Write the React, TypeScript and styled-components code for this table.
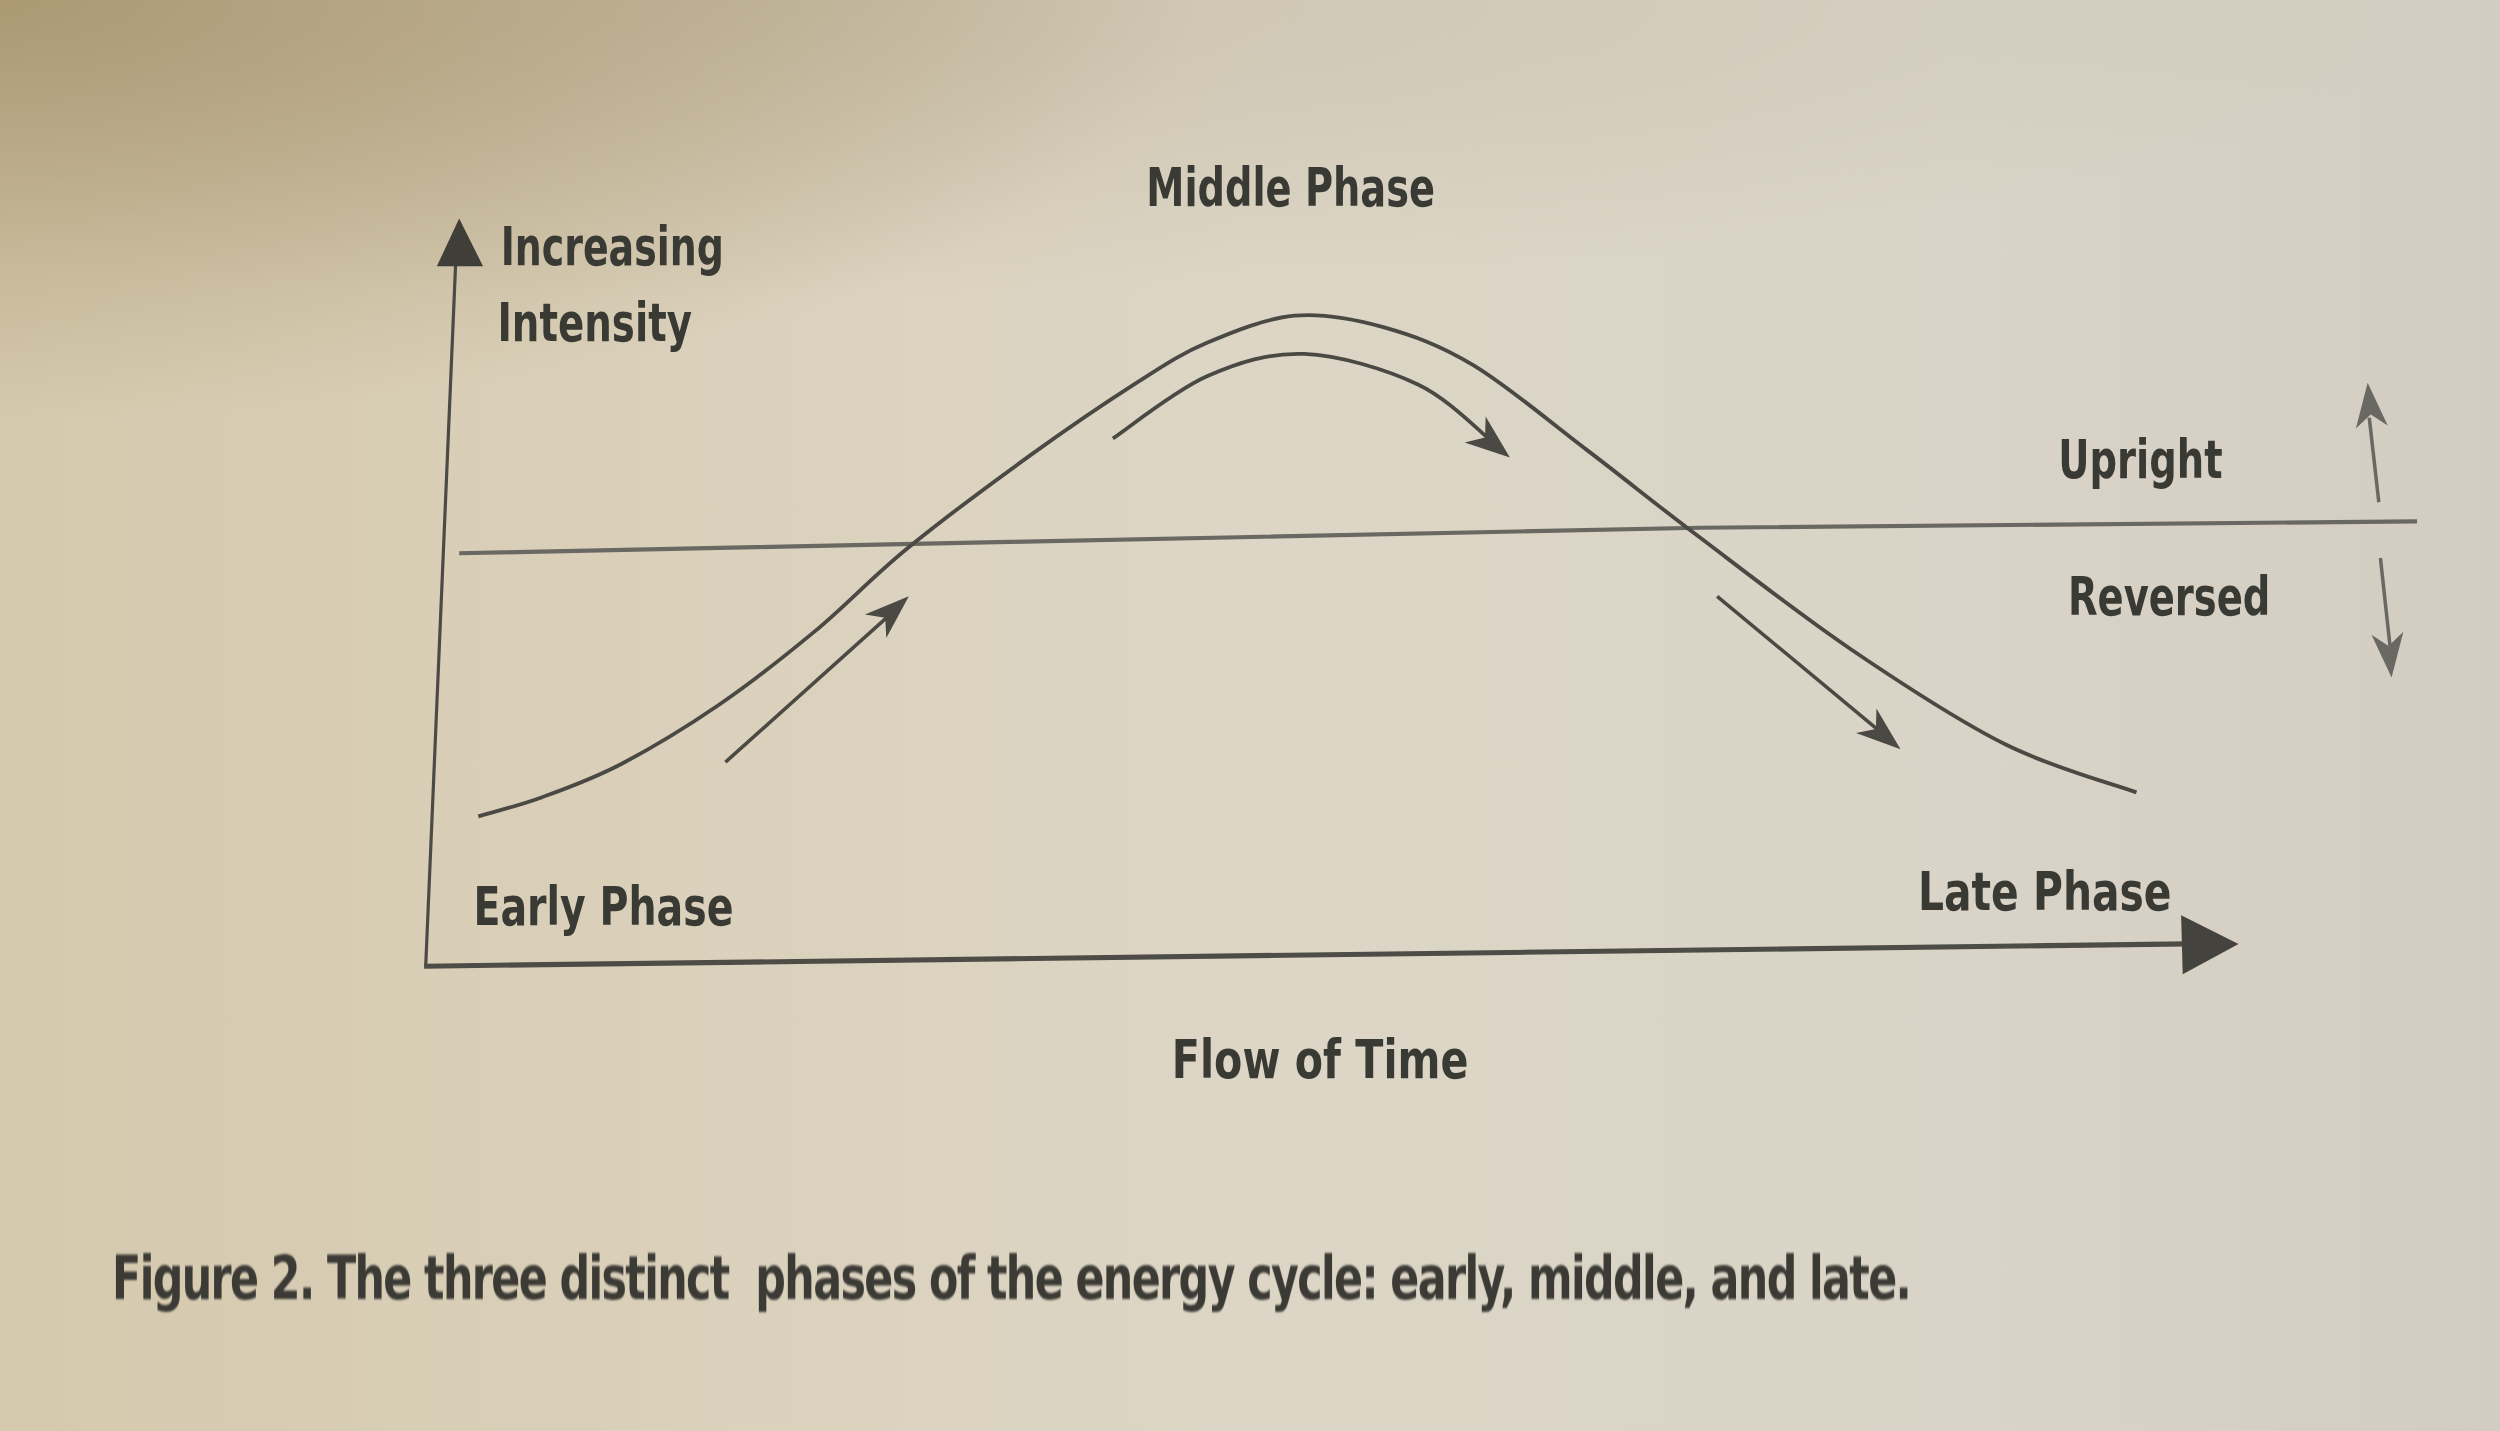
import React from 'react';
import styled, { createGlobalStyle } from 'styled-components';

// the reference was read at 1568px wide; the drawing works in those units and is scaled up
const S = 2500 / 1568;
const FIGURE_HEIGHT = 1190;

type Pt = [number, number];

const GlobalStyle = createGlobalStyle`
  html, body {
    margin: 0;
    padding: 0;
  }
  body {
    width: 2500px;
    height: 1431px;
    overflow: hidden;
    font-family: "DejaVu Sans Condensed", "DejaVu Sans", sans-serif;
  }
`;

// smooth path through points (catmull-rom as cubic beziers)
function smoothPath(pts: Pt[]) {
  let d = `M${pts[0][0]},${pts[0][1]}`;
  for (let i = 0; i < pts.length - 1; i++) {
    const p0 = pts[i - 1] || pts[i];
    const p1 = pts[i];
    const p2 = pts[i + 1];
    const p3 = pts[i + 2] || p2;
    const c1: Pt = [p1[0] + (p2[0] - p0[0]) / 6, p1[1] + (p2[1] - p0[1]) / 6];
    const c2: Pt = [p2[0] - (p3[0] - p1[0]) / 6, p2[1] - (p3[1] - p1[1]) / 6];
    d += ` C${c1[0].toFixed(1)},${c1[1].toFixed(1)} ${c2[0].toFixed(1)},${c2[1].toFixed(1)} ${p2[0]},${p2[1]}`;
  }
  return d;
}

// notched arrow head pointing at `tip`, coming from `from`
function headPoints(tip: Pt, from: Pt, len: number, width: number, notch: number) {
  const dx = tip[0] - from[0];
  const dy = tip[1] - from[1];
  const m = Math.hypot(dx, dy);
  const ux = dx / m;
  const uy = dy / m;
  const nx = -uy;
  const ny = ux;
  const bx = tip[0] - ux * len;
  const by = tip[1] - uy * len;
  const pts: Pt[] = [
    tip,
    [bx + (nx * width) / 2, by + (ny * width) / 2],
    [tip[0] - ux * (len - notch), tip[1] - uy * (len - notch)],
    [bx - (nx * width) / 2, by - (ny * width) / 2],
  ];
  return pts.map(p => `${p[0].toFixed(1)},${p[1].toFixed(1)}`).join(' ');
}

const BELL: Pt[] = [
  [300, 512], [340, 500], [390, 479], [451, 442], [511, 396], [569, 344], [647, 285],
  [713, 240], [757, 215], [812, 198], [867, 205], [924, 229], [995, 282],
  [1066, 337], [1162, 408], [1258, 467], [1340, 497],
];

const OVER_THE_TOP: Pt[] = [[698, 275], [757, 236], [818, 222], [889, 241], [936, 277]];

// label text, left edge, baseline, printed width
const LABELS: [string, number, number, number][] = [
  ['Middle Phase', 719, 129, 181],
  ['Increasing', 314, 166, 140],
  ['Intensity', 312, 214, 122],
  ['Upright', 1291, 300, 103],
  ['Reversed', 1297, 386, 127],
  ['Early Phase', 297, 580, 163],
  ['Late Phase', 1203, 571, 159],
  ['Flow of Time', 735, 676, 186],
];

interface ArrowProps {
  from: Pt;
  to: Pt;
  tip: Pt;
  tone?: string;
}

const StraightArrow: React.FC<ArrowProps> = ({ from, to, tip, tone = '#4a4943' }) => (
  <g>
    <line x1={from[0]} y1={from[1]} x2={to[0]} y2={to[1]} stroke={tone} strokeWidth={2.2} />
    <polygon points={headPoints(tip, from, 28, 20, 8)} fill={tone} />
  </g>
);

const Page = styled.div`
  width: 2500px;
  height: 1431px;
  display: flex;
  flex-direction: column;
  background:
    radial-gradient(ellipse 1200px 420px at 0% 0%, rgba(150, 128, 84, 0.6), rgba(150, 128, 84, 0) 100%),
    radial-gradient(ellipse 1700px 300px at 30% 0%, rgba(140, 124, 92, 0.22), rgba(140, 124, 92, 0) 100%),
    linear-gradient(90deg, #d5c9ad 0%, #dad0ba 25%, #ddd6c6 50%, #d9d4c7 78%, #d2cdc0 100%);
`;

const Drawing = styled.svg`
  display: block;
  flex: none;
  width: 2500px;
  height: ${FIGURE_HEIGHT}px;
  filter: blur(0.7px);
`;

const Label = styled.text`
  font-family: "DejaVu Sans Condensed", "DejaVu Sans", sans-serif;
  font-weight: 700;
  font-size: 33px;
  fill: #3a3a35;
`;

const Caption = styled.p`
  margin: 58px 0 0 112px;
  font-size: 60px;
  line-height: 1;
  font-weight: 700;
  letter-spacing: -2px;
  color: #3b3a35;
  white-space: pre;
  transform: scaleX(0.792);
  transform-origin: left center;
  filter: blur(0.9px);
`;

export default function App() {
  return (
    <Page>
      <GlobalStyle />
      <Drawing viewBox={`0 0 1568 ${(FIGURE_HEIGHT / S).toFixed(2)}`}>
        {/* axes */}
        <line x1={267} y1={606} x2={286} y2={160} stroke="#4b4a45" strokeWidth={2} />
        <polygon points="288,137 274,167 303,167" fill="#3f3e39" />
        <line x1={266} y1={606} x2={1372} y2={592} stroke="#4d4c46" strokeWidth={3.2} />
        <polygon points="1404,592 1368,574 1369,611" fill="#44433e" />

        {/* upright / reversed divider */}
        <polyline points="288,347 1066,331 1516,327" fill="none" stroke="#6a6862" strokeWidth={2.6} />

        {/* energy curve */}
        <path d={smoothPath(BELL)} fill="none" stroke="#4a4944" strokeWidth={2.4} />

        {/* direction arrows */}
        <path d={smoothPath(OVER_THE_TOP)} fill="none" stroke="#4a4943" strokeWidth={2.3} />
        <polygon points={headPoints([947, 287], [900, 249], 28, 21, 8)} fill="#4a4943" />
        <StraightArrow from={[455, 478]} to={[561, 383]} tip={[570, 374]} />
        <StraightArrow from={[1077, 374]} to={[1183, 462]} tip={[1192, 470]} />
        <StraightArrow from={[1492, 315]} to={[1486, 262]} tip={[1485, 240]} tone="#6a6862" />
        <StraightArrow from={[1493, 350]} to={[1499, 405]} tip={[1500, 425]} tone="#6a6862" />

        {LABELS.map(([text, x, y, w]) => (
          <Label key={text} x={x} y={y} textLength={w} lengthAdjust="spacingAndGlyphs">
            {text}
          </Label>
        ))}
      </Drawing>

      <Caption>Figure 2. The three distinct  phases of the energy cycle: early, middle, and late.</Caption>
    </Page>
  );
}
